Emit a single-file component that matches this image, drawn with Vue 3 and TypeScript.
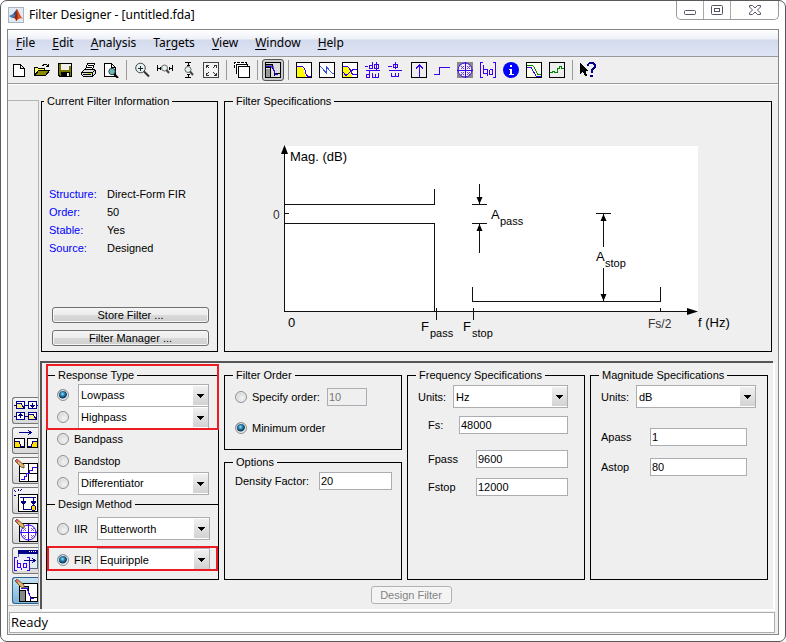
<script setup lang="ts">
import { ref } from 'vue'

interface Tool { label: string; art?: string; pressed?: boolean; separator?: boolean }

const sep: Tool = { label: '', separator: true }
const frame = (fill: string) => `<rect x=".5" y=".5" width="15" height="15" fill="${fill}" stroke="#000"/>`
const blue = '#3a00f0'

const menus = [
  ['', 'F', 'ile'], ['', 'E', 'dit'], ['', 'A', 'nalysis'], ['Ta', 'r', 'gets'],
  ['', 'V', 'iew'], ['', 'W', 'indow'], ['', 'H', 'elp'],
]

const tools: Tool[] = [
  { label: 'New', art: '<path d="M2.500 2.500H9.500L13.500 6.500V14.500H2.500ZM9.500 2.500V6.500H13.500" fill="#fff" stroke="#000"/>' },
  { label: 'Open', art: '<path d="M.5 13.500V5.500H3.500L4.500 6.500H10.500V8.500" fill="#ff6" stroke="#000"/><path d="M.5 13.500L4.500 8.500H15.500L11.500 13.500Z" fill="#8b8b00" stroke="#000"/><path d="M8.500 3.500L10.500 2.500H12.500L14.500 4.500M14.500 2V5M12 4.500H15" fill="none" stroke="#000"/>' },
  { label: 'Save', art: '<path d="M1.500 1.500H14.500V14.500H3L1.500 13Z" fill="#777700" stroke="#000"/><rect x="4" y="2" width="8" height="6" fill="#eee"/><rect x="4" y="10" width="9" height="5" fill="#000"/><rect x="10" y="11" width="2" height="3" fill="#eee"/><rect x="12" y="2" width="2" height="2" fill="#eee"/>' },
  { label: 'Print', art: '<path d="M5.500 7.500L7.500 1.500H14.500L12.500 7.500" fill="#fff" stroke="#000"/><path d="M8 3.500H13M7 5.500H12" stroke="#000"/><path d="M1.500 10.500L4.500 7.500H14.500L15.500 8.500V11.500L12.500 14.500H3.500L1.500 12.500Z" fill="#ddd" stroke="#000"/><path d="M1.500 10.500H12.500V14.500M12.500 10.500L15 8M3 12.500H11" stroke="#000" fill="none"/><rect x="8" y="11" width="3" height="1" fill="#dd0"/>' },
  { label: 'Print preview', art: '<path d="M1.500 1.500H8.500L12.500 5.500V14.500H1.500ZM8.500 1.500V5.500H12.500" fill="#fff" stroke="#000"/><g shape-rendering="auto"><circle cx="9" cy="9.500" r="3.200" fill="#6bb" stroke="#444"/><path d="M11 12L15 16" stroke="#000" stroke-width="2"/></g>' },
  sep,
  { label: 'Zoom in', art: '<g shape-rendering="auto"><circle cx="6.500" cy="6" r="4.800" fill="#e4f1f3" stroke="#444"/><path d="M10 9.500L15 14.500" stroke="#333" stroke-width="2"/></g><path d="M4 6.500H9M6.500 4V9" stroke="#222"/>' },
  { label: 'Zoom X', art: '<path d="M.5 3V9M15.500 3V9M1 6.500H4M12 6.500H15M3.500 5V8M12.500 5V8" stroke="#000"/><g shape-rendering="auto"><circle cx="7.500" cy="6" r="3" fill="#e4f1f3" stroke="#666"/><path d="M9.500 8L12 11" stroke="#444" stroke-width="2"/></g>' },
  { label: 'Zoom Y', art: '<path d="M5 .5H11M5 15.500H11M8.500 1V4M7 3.500H10M8.500 12V15M7 12.500H10" stroke="#000"/><g shape-rendering="auto"><circle cx="8" cy="7.500" r="3" fill="#e4f1f3" stroke="#666"/><path d="M10 9.500L13 13" stroke="#444" stroke-width="2"/></g>' },
  { label: 'Full view', art: '<rect x=".5" y=".5" width="15" height="15" fill="#f4f4f4" stroke="#444"/><path d="M3 5.500V3H5.500M3 3L6 6M10.500 3H13V5.500M13 3L10 6M3 10.500V13H5.500M3 13L6 10M10.500 13H13V10.500M13 13L10 10" fill="none" stroke="#333"/>' },
  sep,
  { label: 'Full view analysis', art: '<rect x="0" y="0" width="12" height="6" fill="#fff"/><path d="M.5 6V.5H12.500V2" fill="none" stroke="#000" stroke-dasharray="3 1"/><path d="M2.500 11.500V2.500H13.500V5" fill="#fff" stroke="#000"/><rect x="4.500" y="4.500" width="11" height="11" fill="#fff" stroke="#000"/>' },
  sep,
  { label: 'Filter specifications', pressed: true, art: frame('#ddd') + `<path d="M1 2H7V4H9V6H1Z" fill="#777"/><path d="M1 5.500H5.500V15M1 2.500H7.500V7M9.500 13.500V11.500H15" fill="none" stroke="#000"/><rect x="1" y="7" width="4" height="8" fill="#999"/><path d="M1 4.500H7.500L10.500 12.500H13" stroke="${blue}" fill="none"/>` },
  sep,
  { label: 'Magnitude response', art: frame('#fff') + `<path d="M1 5H5L8 8L10 15H1Z" fill="#ff0"/><path d="M1 4.500H6.500L8.500 6.500L10.500 13.500L12.500 14.500H15" fill="none" stroke="${blue}"/>` },
  { label: 'Phase response', art: frame('#fff') + '<path d="M1 4L7.500 11V5L13.500 11.500H15" fill="none" stroke="#35d"/>' },
  { label: 'Magnitude and phase', art: frame('#fff') + `<path d="M1 5H5L8 8L10 15H1Z" fill="#ff0"/><path d="M1 4.500H5.500L8.500 8L10.500 12.500H15M1 10L4 13.500L7 11L11 7.500H15" fill="none" stroke="${blue}"/>` },
  { label: 'Group delay', art: `<path d="M0 4.500H3M7.500 0V6.500H4.500V3.500H7M11.500 0V8M9.500 2.500H13.500V6.500H9.500ZM1 8.500H15M4.500 9V15.500H1.500V12.500H4M7.500 11V15.500H13.500V11M10.500 12V15" fill="none" stroke="${blue}"/>` },
  { label: 'Phase delay', art: `<path d="M0 4.500H4M7.500 0V7M5.500 2.500H9.500V5.500H5.500ZM1 8.500H14M3.500 10.500V14.500H10.500V10.500M7.500 11V14" fill="none" stroke="${blue}"/>` },
  { label: 'Impulse response', art: frame('#eee') + `<path d="M8.500 15V3M5 6.500L8.500 3L12 6.500" fill="none" stroke="${blue}"/>` },
  { label: 'Step response', art: `<path d="M0 12.500H5.500V5.500H16" fill="none" stroke="${blue}"/>` },
  { label: 'Pole-zero plot', art: `<rect width="16" height="16" fill="#888"/><g shape-rendering="auto"><circle cx="8" cy="8" r="7" fill="#eee" stroke="${blue}"/></g><path d="M8.500 0V16M0 8.500H16" stroke="${blue}"/><path d="M4 4L7 7M7 4L4 7M10 4L13 7M13 4L10 7M4 10L7 13M7 10L4 13M10 10L13 13M13 10L10 13" stroke="#64c"/>` },
  { label: 'Filter coefficients', art: `<path d="M3 .5H.5V15.500H3M13 .5H15.500V15.500H13M3.500 3V11.500H7.500V7.500H4M7.500 12V14M9.500 7.500H12.500V12M12.500 12.500H9.500V8" fill="none" stroke="${blue}"/>` },
  { label: 'Filter information', art: '<g shape-rendering="auto"><circle cx="8" cy="8" r="8" fill="#00f"/></g><path d="M7 3H9V5H7ZM6 7H9V12H11V13H6V12H7V8H6Z" fill="#fff"/>' },
  { label: 'Magnitude estimate', art: frame('#fffff0') + `<path d="M1 5.500H5L10.500 14.500H15" fill="none" stroke="${blue}"/><path d="M1 3.500H6.500L8.500 5.500L11.500 12.500H15" fill="none" stroke="#080"/>` },
  { label: 'Round-off noise', art: frame('#eee') + '<path d="M1 10.500H3.500V9.500H5.500V10.500H8.500V6.500H10.500V4.500H12.500V6.500H15" fill="none" stroke="#080"/>' },
  sep,
  { label: "What's this?", art: '<path d="M0 1V12L3 9.500L5 14H7L5.500 9H8.500Z" fill="#000"/><path d="M8 4V2.500L9.500 1H13L14.500 2.500V5.500L11.500 8.500V11" fill="none" stroke="#000080" stroke-width="2"/><rect x="10" y="13" width="3" height="2" fill="#000080"/>' },
]

const pencil = '<path d="M1 2L3 0L10 6V9L7 8Z" fill="#e8b070" stroke="#663" shape-rendering="auto"/><path d="M1 2L3 0L5 2L3 4Z" fill="#d66"/>'
const navy = '#00008b'
const modes: Tool[] = [
  { label: 'Create a multirate filter', art: `<g fill="#fff" stroke="${navy}"><rect x="2.500" y="2.500" width="8" height="7"/><rect x="14.500" y="2.500" width="8" height="7"/><rect x="2.500" y="13.500" width="8" height="7"/><rect x="14.500" y="13.500" width="8" height="7"/></g><path d="M3 5H7L9 9H3ZM15 16H19L21 20H15Z" fill="#fe7"/><path d="M0 6.500H2M11 6.500H14M23 6.500H24M0 17.500H2M11 17.500H14M3 4.500H7L10 9M15 15.500H19L22 20M18.500 4V8M16.500 6L18.500 8L20.500 6M6.500 19V15M4.500 17L6.500 15L8.500 17" fill="none" stroke="${navy}"/>` },
  { label: 'Transform filter', art: `<path d="M5 3.500H17M14 1L17 3.500L14 6" fill="none" stroke="${navy}"/><g fill="#fff" stroke="#000"><rect x=".5" y="9.500" width="10" height="9"/><rect x="13.500" y="9.500" width="10" height="9"/></g><path d="M1 13H5L7 18H1ZM17 18L19 13H23V18Z" fill="#fd0"/><path d="M1 12.500H5L7 17.500H10M14 17.500H17L19 12.500H23" fill="none" stroke="${navy}"/>` },
  { label: 'Set quantization parameters', art: `<rect x="5.500" y="4.500" width="18" height="18" fill="#fff" stroke="#000"/><path d="M14.500 5V22M6 14.500H23" stroke="#000"/><path d="M7 20.500H10.500V17.500H12.500V14.500H15.500V11.500H18.500V8.500H23" fill="none" stroke="${blue}"/>` + pencil },
  { label: 'Realize model', art: `<rect x="4.500" y="5.500" width="19" height="17" fill="#fffff4" stroke="#000"/><path d="M6 8.500H22M9.500 8V20H17M19.500 8V18M7 12H12L9.500 16ZM17 12H22L19.500 16Z" fill="none" stroke="${navy}"/><circle cx="19.500" cy="19" r="2.500" fill="#fd0" stroke="${navy}"/><path d="M0 1L2 3M4 0V2M0 6H2M6 2L8 0" stroke="${navy}"/>` },
  { label: 'Pole-zero editor', art: `<rect x="5.500" y="4.500" width="18" height="18" fill="#eee" stroke="#000"/><circle cx="14.500" cy="13.500" r="7.500" fill="#fff" stroke="${blue}" shape-rendering="auto"/><path d="M14.500 5V22M6 13.500H23" stroke="${blue}"/><path d="M9 9L12 12M12 9L9 12M17 9L20 12M20 9L17 12M9 16L12 19M12 16L9 19M17 16L20 19M20 16L17 19" stroke="#75d"/>` + pencil },
  { label: 'Import filter', art: `<rect x="4.500" y="1.500" width="19" height="18" fill="#e4edf7" stroke="#567"/><rect x="4" y="1" width="20" height="4" fill="${navy}"/><path d="M15 2.500H22" stroke="#fff" stroke-dasharray="1 1"/><rect x="0" y="8" width="15" height="14" fill="#eef"/><path d="M2.500 8.500H.5V21.500H2.500M13 8.500H15.500V21.500H13M3.500 11V18.500H6.500V14.500H4M7.500 19V21M12.500 19V14.500H9.500V18.500H12" fill="none" stroke="${blue}"/><path d="M10 11.500H21M18 9L21 11.500L18 14" fill="none" stroke="${navy}"/>` },
  { label: 'Design filter', pressed: true, art: `<rect x="5.500" y="4.500" width="18" height="18" fill="#fff" stroke="#000"/><rect x="6" y="12" width="5" height="10" fill="#888"/><path d="M8 7H14V10H10Z" fill="#777"/><path d="M8 7.500H14.500V13M6 11.500H11.500V22M16.500 22V18.500H23" fill="none" stroke="#000"/><path d="M7 9.500H13L17 19.500H20" fill="none" stroke="${blue}"/>` + pencil },
]

const info = [
  ['Structure:', 'Direct-Form FIR'], ['Order:', '50'], ['Stable:', 'Yes'], ['Source:', 'Designed'],
]

const responses = [
  { id: 'lowpass', text: 'Lowpass', combo: true },
  { id: 'highpass', text: 'Highpass', combo: true },
  { id: 'bandpass', text: 'Bandpass', combo: false },
  { id: 'bandstop', text: 'Bandstop', combo: false },
  { id: 'other', text: 'Differentiator', combo: true },
]
const methods = [
  { id: 'iir', name: 'IIR', text: 'Butterworth' },
  { id: 'fir', name: 'FIR', text: 'Equiripple' },
]

const response = ref('lowpass')
const method = ref('fir')
const orderMode = ref('minimum')
const order = ref('10')
const density = ref('20')
const fs = ref('48000')
const fpass = ref('9600')
const fstop = ref('12000')
const apass = ref('1')
const astop = ref('80')
</script>

<template>
  <div class="window">
    <header class="titlebar">
      <svg class="logo" viewBox="0 0 16 16" aria-hidden="true">
        <rect x=".5" y=".5" width="15" height="15" fill="#e4eaf2" stroke="#a9b4c2" />
        <path d="M1 9L5 7L7 9L4 11Z" fill="#3b7cc0" />
        <path d="M5 7L9 2L8 9L6 11L4 11L7 9Z" fill="#274d80" />
        <path d="M9 2C10 3 12 9 15 12C12 10 10 13 8 14C8 12 7 11 6 11C8 9 8 4 9 2Z" fill="#d9541a" />
        <path d="M9 2C9 6 10 9 9 13L8 14C8 12 7 11 6 11C8 9 8 4 9 2Z" fill="#8e2410" />
      </svg>
      <h1>Filter Designer - [untitled.fda]</h1>
      <div class="controls">
        <button type="button" aria-label="Minimize">
          <svg width="14" height="12"><rect x="1.500" y="6.500" width="11" height="4" rx="1" fill="#fff" stroke="#556" /></svg>
        </button>
        <button type="button" aria-label="Maximize">
          <svg width="14" height="12"><rect x="1.500" y="1.500" width="11" height="9" rx="1" fill="#fff" stroke="#556" /><rect x="4.500" y="4.500" width="5" height="3" fill="#fff" stroke="#556" /></svg>
        </button>
        <button type="button" aria-label="Close" class="close">
          <svg width="14" height="12"><path d="M1.500 1.500H4.500L7 4L9.500 1.500H12.500V3L9.500 6L12.500 9V10.500H9.500L7 8L4.500 10.500H1.500V9L4.500 6L1.500 3Z" fill="#fff" stroke="#556" /></svg>
        </button>
      </div>
    </header>

    <div class="frame">
      <nav class="menubar">
        <button v-for="m in menus" :key="m.join('')" type="button">{{ m[0] }}<u>{{ m[1] }}</u>{{ m[2] }}</button>
      </nav>

      <div class="toolbar" role="toolbar" aria-label="Tools">
        <template v-for="(t, i) in tools" :key="i">
          <span v-if="t.separator" class="sep"></span>
          <button v-else type="button" :class="{ pressed: t.pressed }" :aria-label="t.label">
            <svg width="16" height="16" shape-rendering="crispEdges" v-html="t.art"></svg>
          </button>
        </template>
      </div>

      <div class="body">
        <aside class="sidebar">
          <button v-for="m in modes" :key="m.label" type="button" :class="{ pressed: m.pressed }" :aria-label="m.label">
            <svg width="24" height="24" shape-rendering="crispEdges" v-html="m.art"></svg>
          </button>
        </aside>

        <main>
          <div class="top">
            <fieldset class="current">
              <legend>Current Filter Information</legend>
              <dl>
                <template v-for="row in info" :key="row[0]">
                  <dt>{{ row[0] }}</dt>
                  <dd>{{ row[1] }}</dd>
                </template>
              </dl>
              <div class="stack">
                <button type="button" class="push">Store Filter ...</button>
                <button type="button" class="push">Filter Manager ...</button>
              </div>
            </fieldset>

            <fieldset class="specs">
              <legend>Filter Specifications</legend>
              <svg class="plot" viewBox="0 0 546 241" role="img" aria-label="Lowpass magnitude specification">
                <rect x="59" y="38" width="414" height="165" fill="#fff" />
                <g fill="none" stroke="#111" shape-rendering="crispEdges">
                  <path d="M59.500 41V203.500H468M59.500 105.500H64" />
                  <path d="M59.500 81V96.500H209.500V81M59.500 115.500H209.500V203" />
                  <path d="M211.500 200V212M248.500 200V212M435.500 200V203" />
                  <path d="M247.500 179V193.500H435.500V179" />
                  <path d="M247 96.500H262M247 115.500H262M254.500 76V96M254.500 116V145" />
                  <path d="M371 105.500H386M378.500 106V139M378.500 160V193" />
                </g>
                <g fill="#000">
                  <path d="M59.500 37L63 46H56ZM473 203.500L462 200V207Z" />
                  <path d="M254.500 96L251.500 89H257.500ZM254.500 116L251.500 123H257.500Z" />
                  <path d="M378.500 106L375.500 113H381.500ZM378.500 193L375.500 186H381.500Z" />
                </g>
                <g class="big">
                  <text x="65" y="53">Mag. (dB)</text>
                  <text x="63" y="219">0</text>
                  <text x="196" y="223">F</text>
                  <text x="238" y="223">F</text>
                  <text x="266" y="111">A</text>
                  <text x="371" y="153">A</text>
                  <text x="473" y="219">f (Hz)</text>
                </g>
                <g class="small">
                  <text x="205" y="229">pass</text>
                  <text x="247" y="229">stop</text>
                  <text x="275" y="117">pass</text>
                  <text x="380" y="159">stop</text>
                </g>
                <g class="tick">
                  <text x="48" y="111">0</text>
                  <text x="423" y="220">Fs/2</text>
                </g>
              </svg>
            </fieldset>
          </div>

          <section class="design">
            <div class="columns">
              <div class="response">
                <fieldset class="types">
                  <legend>Response Type</legend>
                  <div v-for="r in responses" :key="r.id" class="row">
                    <input :id="r.id" v-model="response" type="radio" name="response" :value="r.id" :aria-label="r.text" />
                    <span v-if="r.combo" class="combo">
                      <select :aria-label="r.text + ' type'"><option>{{ r.text }}</option></select>
                    </span>
                    <label v-else :for="r.id">{{ r.text }}</label>
                  </div>
                </fieldset>
                <fieldset class="methods">
                  <legend>Design Method</legend>
                  <div v-for="m in methods" :key="m.id" class="row">
                    <input :id="m.id" v-model="method" type="radio" name="method" :value="m.id" />
                    <label :for="m.id">{{ m.name }}</label>
                    <span class="combo">
                      <select :aria-label="m.name + ' method'"><option>{{ m.text }}</option></select>
                    </span>
                  </div>
                </fieldset>
                <div class="mark mark-types"></div>
                <div class="mark mark-fir"></div>
              </div>

              <div class="middle">
                <fieldset class="order">
                  <legend>Filter Order</legend>
                  <div class="row">
                    <input id="specify" v-model="orderMode" type="radio" name="order" value="specify" />
                    <label for="specify">Specify order:</label>
                    <input v-model="order" type="text" aria-label="Order" :disabled="orderMode !== 'specify'" />
                  </div>
                  <div class="row">
                    <input id="minimum" v-model="orderMode" type="radio" name="order" value="minimum" />
                    <label for="minimum">Minimum order</label>
                  </div>
                </fieldset>
                <fieldset class="options">
                  <legend>Options</legend>
                  <div class="row">
                    <label for="density">Density Factor:</label>
                    <input id="density" v-model="density" type="text" />
                  </div>
                </fieldset>
              </div>

              <fieldset class="frequency">
                <legend>Frequency Specifications</legend>
                <div class="row units">
                  <label for="funits">Units:</label>
                  <span class="combo"><select id="funits"><option>Hz</option></select></span>
                </div>
                <div class="row rate">
                  <label for="fs">Fs:</label>
                  <input id="fs" v-model="fs" type="text" />
                </div>
                <div class="row edge">
                  <label for="fpass">Fpass</label>
                  <input id="fpass" v-model="fpass" type="text" />
                </div>
                <div class="row edge">
                  <label for="fstop">Fstop</label>
                  <input id="fstop" v-model="fstop" type="text" />
                </div>
              </fieldset>

              <fieldset class="magnitude">
                <legend>Magnitude Specifications</legend>
                <div class="row units">
                  <label for="munits">Units:</label>
                  <span class="combo"><select id="munits"><option>dB</option></select></span>
                </div>
                <div class="row edge">
                  <label for="apass">Apass</label>
                  <input id="apass" v-model="apass" type="text" />
                </div>
                <div class="row edge">
                  <label for="astop">Astop</label>
                  <input id="astop" v-model="astop" type="text" />
                </div>
              </fieldset>
            </div>
            <button type="button" class="push apply" disabled>Design Filter</button>
          </section>
        </main>
      </div>

      <footer class="status">Ready</footer>
    </div>
  </div>
</template>

<style>
body {
  background: #fff;
}
</style>

<style scoped>
* {
  box-sizing: border-box;
}
.window {
  display: flex;
  flex-direction: column;
  min-height: 100vh;
  padding: 0 6px 6px;
  border: 1px solid #5a5a5a;
  border-radius: 7px;
  background: #fff;
  color: #000;
  font: 11px/14px "Liberation Sans", Arial, sans-serif;
}
button,
input,
select {
  margin: 0;
  font: inherit;
  color: inherit;
}
.titlebar {
  display: flex;
  align-items: center;
  height: 28px;
}
.logo {
  width: 16px;
  height: 16px;
  margin: 0 5px 0 1px;
}
h1 {
  flex: 1;
  margin: 0;
  font: 12px/20px "Noto Sans", "Open Sans", sans-serif;
}
.controls {
  display: flex;
  align-self: flex-start;
  height: 19px;
  border: 1px solid #999;
  border-top: 0;
  border-radius: 0 0 5px 5px;
}
.controls button {
  display: grid;
  place-items: center;
  width: 27px;
  padding: 0;
  border: 0;
  border-right: 1px solid #aaa;
  background: none;
}
.controls .close {
  width: 47px;
  border-right: 0;
}
.frame {
  flex: 1;
  display: flex;
  flex-direction: column;
  border: 1px solid #858585;
  background: #efefef;
}
.menubar {
  display: flex;
  gap: 17px;
  height: 27px;
  padding: 0 8px;
  border-bottom: 1px solid #999;
  background: linear-gradient(#fff 0, #eef1f8 9px, #d3daec 10px, #dfe5f5 100%);
}
.menubar button {
  padding: 0;
  border: 0;
  background: none;
  font: 12px/26px "Noto Sans", "Open Sans", sans-serif;
}
.menubar u {
  text-underline-offset: 2px;
}
.toolbar {
  display: flex;
  align-items: center;
  gap: 1px;
  height: 27px;
  border-bottom: 1px solid #999;
}
.toolbar button {
  display: grid;
  place-items: center;
  width: 22px;
  height: 22px;
  padding: 0;
  border: 0;
  border-radius: 3px;
  background: none;
}
.toolbar .pressed {
  border: 1px solid #555;
  background: #ccc;
}
.sep {
  width: 1px;
  height: 20px;
  margin: 0 3px;
  background: #999;
}
.body {
  flex: 1;
  display: flex;
  border-top: 1px solid #fff;
}
.sidebar {
  display: flex;
  flex-direction: column;
  justify-content: flex-end;
  gap: 3px;
  width: 31px;
  margin: 15px 1px 3px 0;
  padding: 0 0 1px 4px;
  border: 1px solid #b4b4b4;
  border-width: 1px 1px 1px 0;
}
.sidebar button {
  display: grid;
  place-items: center end;
  height: 27px;
  padding: 0;
  border: 1px solid #777;
  border-right: 0;
  border-radius: 3px 0 0 3px;
  background: linear-gradient(#f6f6f6, #d8d8d8);
}
.sidebar .pressed {
  border-color: #2c628b;
  background: linear-gradient(#c5e1f2, #7ab5d8);
}
main {
  flex: 1;
  display: flex;
  flex-direction: column;
  min-width: 0;
  padding-right: 4px;
}
fieldset {
  min-width: 0;
  margin: 0;
  padding: 0;
  border: 1px solid #000;
}
legend {
  margin-left: 8px;
  padding: 0 3px;
}
.columns legend {
  margin-left: -2px;
}
.top {
  flex: 1;
  display: flex;
  gap: 6px;
  padding: 9px 2px 9px 1px;
}
.current {
  display: flex;
  flex-direction: column;
  width: 177px;
}
.current legend {
  margin-left: 2px;
}
dl {
  display: grid;
  grid-template-columns: 58px 1fr;
  margin: 77px 0 0 7px;
  line-height: 18px;
}
dt {
  color: #00f;
}
dd {
  margin: 0;
}
.stack {
  display: grid;
  gap: 7px;
  margin: 50px 8px 0 10px;
}
.push {
  height: 16px;
  padding: 0;
  border: 1px solid #707070;
  border-radius: 3px;
  background: linear-gradient(#f4f4f4 0, #ececec 50%, #dadada 50%, #cfcfcf 100%);
  box-shadow: inset 0 0 0 1px #f6f6f6;
  line-height: 14px;
}
.specs {
  flex: 1;
}
.plot {
  display: block;
  width: 100%;
}
.big {
  font-size: 13px;
}
.small {
  font-size: 11px;
}
.tick {
  font-size: 12px;
  fill: #333;
}
.design {
  display: flex;
  flex-direction: column;
  margin-right: 1px;
  padding: 5px 5px 5px 4px;
  border: 2px solid #555;
  border-width: 2px 0 0 2px;
  box-shadow: 2px 2px 0 #fff;
}
.columns {
  display: grid;
  grid-template-columns: 173fr 178fr 178fr 178fr;
  gap: 5px;
}
.response {
  position: relative;
  display: flex;
  flex-direction: column;
}
.types {
  height: 136px;
  padding: 2px 9px 0 10px;
  border-bottom: 0;
}
.methods {
  flex: 1;
  margin-top: -7px;
  padding: 6px 8px 0 10px;
}
.row {
  display: flex;
  align-items: center;
}
.types .row {
  gap: 5px;
  height: 22px;
}
.types .combo {
  margin-left: 4px;
}
.methods .row {
  gap: 5px;
  margin-bottom: 8px;
}
.methods label {
  width: 18px;
}
.mark {
  position: absolute;
  border: 2px solid #ed1c24;
}
.mark-types {
  inset: -4px 0 auto 0;
  height: 66px;
}
.mark-fir {
  inset: auto 1px 9px 1px;
  height: 25px;
}
.combo {
  flex: 1;
  display: grid;
  height: 23px;
}
.combo select {
  grid-area: 1 / 1;
  min-width: 0;
  padding: 0 18px 0 2px;
  border: 1px solid #abadb3;
  border-radius: 0;
  background: #fff;
  appearance: none;
}
.combo::after {
  content: "";
  grid-area: 1 / 1;
  justify-self: end;
  width: 15px;
  margin: 2px 1px;
  background:
    linear-gradient(#000, #000) 4px 8px / 7px 1px no-repeat,
    linear-gradient(#000, #000) 5px 9px / 5px 1px no-repeat,
    linear-gradient(#000, #000) 6px 10px / 3px 1px no-repeat,
    linear-gradient(#000, #000) 7px 11px / 1px 1px no-repeat,
    linear-gradient(#f0f0f0, #d2d2d2);
  pointer-events: none;
}
input[type="radio"] {
  flex: none;
  width: 12px;
  height: 12px;
  border: 1px solid #8e8f8f;
  border-radius: 50%;
  background: radial-gradient(circle at 60% 60%, #f4f4f4, #c4c8cc);
  box-shadow: inset 0 0 0 1px #eee;
  appearance: none;
}
input[type="radio"]:checked {
  background: radial-gradient(circle at 45% 40%, #9de2fa 0, #2a86b8 2px, #0c3553 4px, #dce4ea 5px);
}
input[type="text"] {
  min-width: 0;
  height: 18px;
  padding: 0 1px;
  border: 1px solid #abadb3;
  border-radius: 0;
  background: #fff;
}
input[type="text"]:disabled {
  background: #efefef;
  color: #777;
}
.middle {
  display: flex;
  flex-direction: column;
  gap: 5px;
}
.order {
  height: 82px;
  padding: 6px 10px 0;
}
.order .row {
  gap: 5px;
  height: 18px;
  margin-bottom: 13px;
}
.order input[type="text"] {
  width: 40px;
  margin-left: 2px;
}
.options {
  height: 125px;
  padding: 3px 9px 0 10px;
}
.options label {
  flex: 1;
}
.options input {
  width: 73px;
}
.frequency {
  padding: 3px 16px 0 10px;
}
.magnitude {
  padding: 3px 11px 0 10px;
}
.units label {
  width: 35px;
}
.rate {
  margin-top: 8px;
  padding-left: 10px;
}
.rate label {
  width: 31px;
}
.rate input,
.edge input {
  flex: 1;
}
.frequency .edge {
  margin-top: 10px;
  padding-left: 10px;
}
.rate + .edge {
  padding-top: 6px;
}
.frequency .edge label {
  width: 48px;
}
.magnitude .edge {
  margin-top: 12px;
  padding-right: 9px;
}
.magnitude .units + .edge {
  margin-top: 20px;
}
.magnitude .edge label {
  width: 49px;
}
.apply {
  align-self: center;
  width: 81px;
  height: 18px;
  margin: 6px 0 0 8px;
}
.apply:disabled {
  border-color: #adb2b5;
  background: #f4f4f4;
  color: #838383;
}
.status {
  height: 21px;
  margin: 3px 3px 1px 1px;
  padding-left: 1px;
  border: 1px solid #abadb3;
  background: #fff;
  font: 13px/18px "Open Sans", "Noto Sans", sans-serif;
}
</style>
